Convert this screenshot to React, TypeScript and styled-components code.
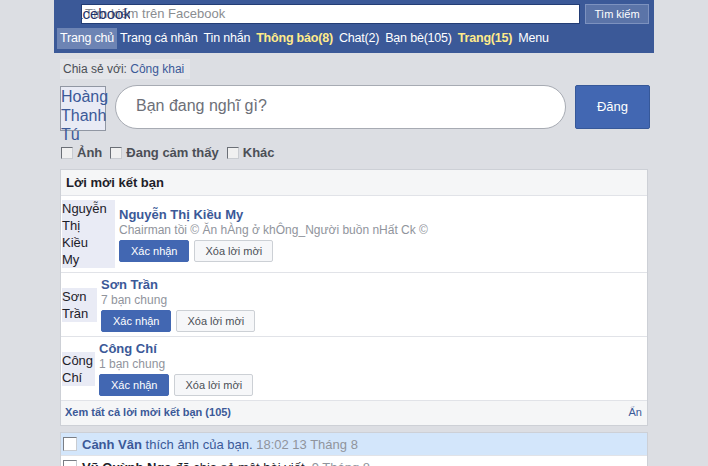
import React from "react";
import styled, { createGlobalStyle } from "styled-components";

const GlobalStyle = createGlobalStyle`
  body {
    margin: 0;
    background: #dcdee3;
    font-family: "Liberation Sans", Arial, sans-serif;
    font-size: 13px;
    color: #1d2129;
  }
`;

const Page = styled.div`
  width: 600px;
  margin: 0 auto;
`;

const Header = styled.div`
  background: #3b5998;
  height: 53px;
`;

const SearchRow = styled.div`
  position: relative;
  display: flex;
  padding: 4px 5px 0 27px;
  gap: 5px;
`;

// logo alt text sits on top of the search box, its "fa" clipped away
const Logo = styled.div`
  position: absolute;
  left: 28px;
  top: 5px;
  z-index: 2;
  width: 48px;
  overflow: hidden;
  white-space: nowrap;
  text-indent: -12px;
  font-size: 15px;
  line-height: 18px;
  color: #1f326a;
`;

const SearchInput = styled.div`
  flex: 1;
  height: 18px;
  background: #fff;
  border: 1px solid #233d75;
  color: #8a8d91;
  font-size: 13px;
  line-height: 18px;
  padding-left: 3px;
`;

const SearchButton = styled.div`
  width: 62px;
  height: 18px;
  background: #5b74a8;
  border: 1px solid #7d92bf;
  color: #fff;
  font-size: 11px;
  line-height: 18px;
  text-align: center;
`;

const Nav = styled.div`
  display: flex;
  padding: 4px 0 0 3px;
`;

const NavItem = styled.div<{ $active?: boolean; $alert?: boolean }>`
  padding: 0 3px;
  height: 21px;
  line-height: 21px;
  font-size: 12.5px;
  letter-spacing: -0.2px;
  color: ${(p) => (p.$alert ? "#ffeb8a" : "#fff")};
  font-weight: ${(p) => (p.$alert ? "bold" : "normal")};
  background: ${(p) => (p.$active ? "#6d84b4" : "transparent")};
`;

const Body = styled.div`
  padding: 6px 6px 0 6px;
`;

const Privacy = styled.div`
  display: inline-block;
  background: #e4e5e9;
  color: #4b4f56;
  font-size: 12px;
  padding: 3px 6px 3px 3px;
  a {
    color: #3b5998;
    text-decoration: none;
  }
`;

const Composer = styled.div`
  display: flex;
  align-items: flex-start;
  margin: 6px -2px 0 0;
`;

const AvatarAlt = styled.div<{ $w: number; $h: number; $boxed?: boolean }>`
  flex: none;
  width: ${(p) => p.$w}px;
  height: ${(p) => p.$h}px;
  margin-top: ${(p) => (p.$boxed ? "1px" : "0")};
  background: #e9ebf5;
  border: ${(p) => (p.$boxed ? "1px solid #9197a3" : "none")};
  color: ${(p) => (p.$boxed ? "#3b5998" : "#1d2129")};
  font-size: ${(p) => (p.$boxed ? "16px" : "13px")};
  line-height: ${(p) => (p.$boxed ? "19px" : "17px")};
  box-sizing: border-box;
  display: flex;
  flex-direction: column;
  justify-content: ${(p) => (p.$boxed ? "flex-start" : "center")};
`;

const AltText = styled.span`
  display: block;
  width: min-content;
`;

const ComposerInput = styled.div`
  flex: 1;
  height: 44px;
  margin: 0 9px;
  border: 1px solid #a7abb3;
  border-radius: 23px;
  background: #fff;
  color: #6d7078;
  font-size: 16px;
  line-height: 40px;
  padding-left: 20px;
  box-sizing: border-box;
`;

const PostButton = styled.div`
  width: 75px;
  height: 44px;
  background: #4267b2;
  border: 1px solid #365899;
  border-radius: 2px;
  color: #fff;
  font-size: 13px;
  line-height: 42px;
  text-align: center;
  box-sizing: border-box;
`;

const Attach = styled.div`
  display: flex;
  gap: 8px;
  margin-top: 14px;
  padding-left: 1px;
`;

const AttachItem = styled.div`
  display: flex;
  align-items: center;
  gap: 4px;
  color: #4b4f56;
  font-weight: bold;
  font-size: 13px;
`;

const MiniBox = styled.span`
  display: inline-block;
  width: 10px;
  height: 10px;
  border: 1px solid #6b6f76;
  border-right-color: #c9ccd1;
  border-bottom-color: #c9ccd1;
  background: #f0f0f0;
`;

const Card = styled.div`
  background: #fff;
  border: 1px solid #cdd0d6;
  margin-top: 9px;
`;

const CardHead = styled.div`
  background: #f5f6f7;
  height: 26px;
  line-height: 25px;
  padding-left: 5px;
  font-weight: bold;
  font-size: 13px;
  border-bottom: 1px solid #e1e3e8;
  box-sizing: border-box;
`;

const Request = styled.div<{ $h: number }>`
  display: flex;
  align-items: center;
  gap: 4px;
  height: ${(p) => p.$h}px;
  padding-left: 1px;
  border-bottom: 1px solid #e1e3e8;
  box-sizing: border-box;
`;

const ReqInfo = styled.div`
  display: flex;
  flex-direction: column;
`;

const ReqName = styled.div`
  color: #3b5998;
  font-weight: bold;
  font-size: 13px;
  line-height: 16px;
`;

const ReqSub = styled.div`
  color: #90949c;
  font-size: 12px;
  line-height: 15px;
`;

const Buttons = styled.div`
  display: flex;
  gap: 5px;
  margin-top: 2px;
`;

const Btn = styled.div<{ $primary?: boolean }>`
  height: 20px;
  line-height: 20px;
  font-size: 11px;
  padding: 0 ${(p) => (p.$primary ? "11px" : "10px")};
  border: 1px solid ${(p) => (p.$primary ? "#4267b2" : "#ccd0d5")};
  border-radius: 2px;
  background: ${(p) => (p.$primary ? "#4267b2" : "#f6f7f9")};
  color: ${(p) => (p.$primary ? "#fff" : "#4b4f56")};
`;

const CardFoot = styled.div`
  display: flex;
  justify-content: space-between;
  background: #f5f6f7;
  height: 24px;
  line-height: 23px;
  padding: 0 5px 0 4px;
  color: #3b5998;
  font-size: 11px;
  b {
    font-weight: bold;
  }
`;

const Notifs = styled.div`
  background: #fff;
  border: 1px solid #cdd0d6;
  border-bottom: none;
  margin-top: 6px;
`;

const Notif = styled.div<{ $unread?: boolean }>`
  display: flex;
  align-items: center;
  gap: 5px;
  height: 22px;
  padding-left: 2px;
  background: ${(p) => (p.$unread ? "#d3e6fb" : "#fff")};
  color: ${(p) => (p.$unread ? "#3b5998" : "#1d2129")};
  font-size: 13px;
  border-bottom: 1px solid #e1e3e8;
`;

const NotifIcon = styled.span`
  display: inline-block;
  width: 12px;
  height: 12px;
  border: 1px solid #7a7e85;
  border-right-color: #c9ccd1;
  border-bottom-color: #c9ccd1;
  background: #fff;
`;

const Time = styled.span`
  color: #90949c;
`;

const requests = [
  {
    name: "Nguyễn Thị Kiều My",
    sub: "Chairman tồi © Ăn hÀng ở khÔng_Người buồn nHất Ck ©",
    w: 53,
    h: 68,
    row: 77,
  },
  { name: "Sơn Trần", sub: "7 bạn chung", w: 35, h: 34, row: 64 },
  { name: "Công Chí", sub: "1 bạn chung", w: 33, h: 34, row: 64 },
];

const navItems = [
  { label: "Trang chủ", active: true },
  { label: "Trang cá nhân" },
  { label: "Tin nhắn" },
  { label: "Thông báo(8)", alert: true },
  { label: "Chat(2)" },
  { label: "Bạn bè(105)" },
  { label: "Trang(15)", alert: true },
  { label: "Menu" },
];

export default function App() {
  return (
    <Page>
      <GlobalStyle />
      <Header>
        <SearchRow>
          <Logo>facebook</Logo>
          <SearchInput>Tìm kiếm trên Facebook</SearchInput>
          <SearchButton>Tìm kiếm</SearchButton>
        </SearchRow>
        <Nav>
          {navItems.map((n) => (
            <NavItem key={n.label} $active={n.active} $alert={n.alert}>
              {n.label}
            </NavItem>
          ))}
        </Nav>
      </Header>

      <Body>
        <Privacy>
          Chia sẻ với: <a href="#">Công khai</a>
        </Privacy>

        <Composer>
          <AvatarAlt $w={46} $h={45} $boxed>
            <AltText>Hoàng Thanh Tú</AltText>
          </AvatarAlt>
          <ComposerInput>Bạn đang nghĩ gì?</ComposerInput>
          <PostButton>Đăng</PostButton>
        </Composer>

        <Attach>
          <AttachItem>
            <MiniBox />
            Ảnh
          </AttachItem>
          <AttachItem>
            <MiniBox />
            Đang cảm thấy
          </AttachItem>
          <AttachItem>
            <MiniBox />
            Khác
          </AttachItem>
        </Attach>

        <Card>
          <CardHead>Lời mời kết bạn</CardHead>
          {requests.map((r) => (
            <Request key={r.name} $h={r.row}>
              <AvatarAlt $w={r.w} $h={r.h}>
                <AltText>{r.name}</AltText>
              </AvatarAlt>
              <ReqInfo>
                <ReqName>{r.name}</ReqName>
                <ReqSub>{r.sub}</ReqSub>
                <Buttons>
                  <Btn $primary>Xác nhận</Btn>
                  <Btn>Xóa lời mời</Btn>
                </Buttons>
              </ReqInfo>
            </Request>
          ))}
          <CardFoot>
            <b>Xem tất cả lời mời kết bạn (105)</b>
            <span>Ẩn</span>
          </CardFoot>
        </Card>

        <Notifs>
          <Notif $unread>
            <NotifIcon />
            <span>
              <b>Cảnh Vân</b> thích ảnh của bạn. <Time>18:02 13 Tháng 8</Time>
            </span>
          </Notif>
          <Notif>
            <NotifIcon />
            <span>
              <b>Vũ Quỳnh Nga</b> đã chia sẻ một bài viết. <Time>9 Tháng 8</Time>
            </span>
          </Notif>
        </Notifs>
      </Body>
    </Page>
  );
}
